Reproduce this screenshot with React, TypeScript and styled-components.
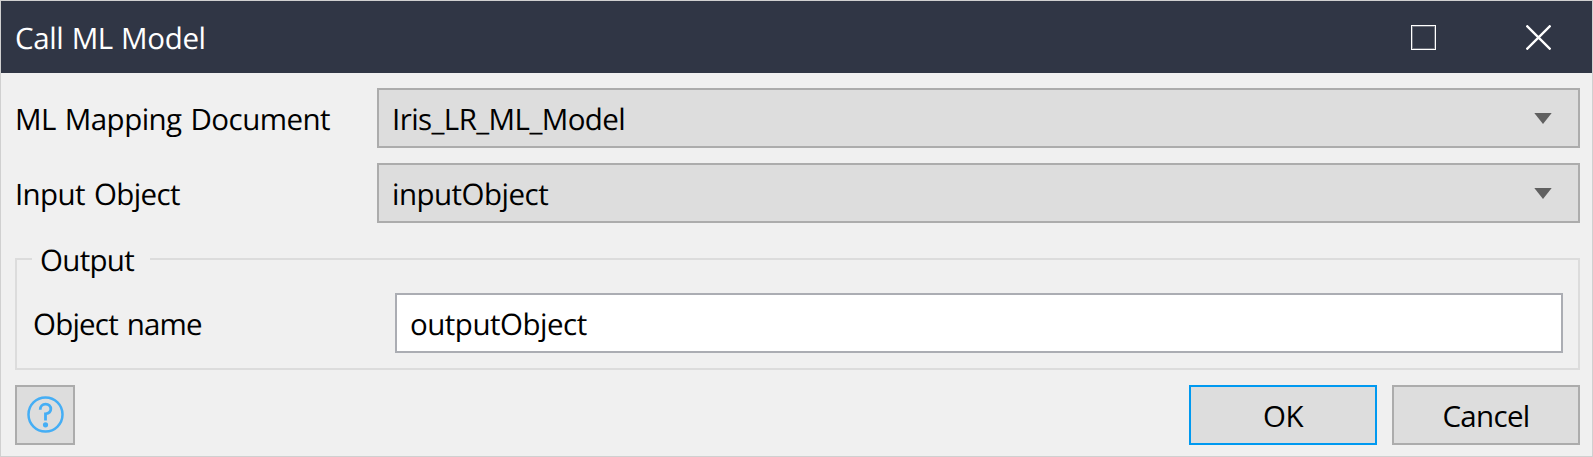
import React from "react";
import styled, { createGlobalStyle } from "styled-components";

const GlobalStyle = createGlobalStyle`
  * { box-sizing: border-box; }
  body { margin: 0; background: #f0f0f0; }
`;

const Dialog = styled.div`
  display: flex;
  flex-direction: column;
  width: 100%;
  height: 457px;
  border: 1px solid #d0d0d0;
  background: #f0f0f0;
  color: #000;
  font-family: "Open Sans", "Segoe UI", sans-serif;
  font-size: 29.5px;
  line-height: 40px;
  text-rendering: geometricPrecision;
`;

const TitleBar = styled.header`
  display: flex;
  align-items: center;
  justify-content: space-between;
  height: 72px;
  padding: 0 41px 0 14px;
  background: #303645;
  color: #fff;
`;

const WindowControls = styled.div`
  display: flex;
  align-items: center;
  gap: 90px;
  svg { display: block; }
`;

const Text = styled.span<{ $spacing?: number; $word?: number }>`
  padding-top: 2px;
  white-space: pre;
  letter-spacing: ${(p) => p.$spacing ?? 0}px;
  word-spacing: ${(p) => p.$word ?? 0}px;
`;

const Body = styled.main`
  display: flex;
  flex-direction: column;
  padding: 15px 12px 0 14px;
`;

const Row = styled.div`
  display: grid;
  grid-template-columns: 362px 1fr;
  align-items: center;
  height: 60px;
  & + & { margin-top: 15px; }
`;

const Select = styled.div`
  display: flex;
  align-items: center;
  justify-content: space-between;
  height: 60px;
  padding: 0 26px 0 13px;
  border: 2px solid #acacac;
  background: #dddddd;
  svg { display: block; }
`;

const Field = styled.div`
  display: flex;
  align-items: center;
  height: 60px;
  padding: 0 13px;
  border: 2px solid #abadb3;
  background: #fff;
`;

const Group = styled.fieldset`
  min-width: 0;
  margin: 16px 0 0;
  padding: 14px 15px 15px 16px;
  border: 2px solid #dcdcdc;
`;

const Legend = styled.legend`
  display: flex;
  width: 118px;
  height: 40px;
  margin-left: -1px;
  padding: 0 0 0 8px;
  line-height: 38px;
`;

const Footer = styled.footer`
  display: flex;
  gap: 15px;
  margin-top: 15px;
`;

const Button = styled.button<{ $primary?: boolean; $square?: boolean }>`
  display: flex;
  align-items: center;
  justify-content: center;
  width: ${(p) => (p.$square ? 60 : 188)}px;
  height: 60px;
  margin-right: ${(p) => (p.$square ? "auto" : "0")};
  padding: 0;
  border: 2px solid ${(p) => (p.$primary ? "#0099f0" : "#acacac")};
  background: #dddddd;
  color: #000;
  font: inherit;
`;

const Arrow = () => (
  <svg width="18" height="12" viewBox="0 0 18 12">
    <path d="M0.3 1H17.7L9 12Z" fill="#606060" />
  </svg>
);

export default function App() {
  return (
    <>
      <GlobalStyle />
      <Dialog>
        <TitleBar>
          <Text $spacing={-0.35} $word={0.9}>Call ML Model</Text>
          <WindowControls>
            <svg width="25" height="25" viewBox="0 0 25 25" fill="none">
              <rect x="1.5" y="1.5" width="22" height="22" stroke="#696d78" />
              <rect x="0.5" y="0.5" width="24" height="24" stroke="#fff" />
            </svg>
            <svg width="25" height="25" viewBox="0 0 25 25">
              <path d="M0.5 0.5L24.5 24.5M24.5 0.5L0.5 24.5" stroke="#fff" strokeWidth="2.3" />
            </svg>
          </WindowControls>
        </TitleBar>
        <Body>
          <Row>
            <Text $spacing={-0.54} $word={1.8}>ML Mapping Document</Text>
            <Select>
              <Text $spacing={-0.58}>Iris_LR_ML_Model</Text>
              <Arrow />
            </Select>
          </Row>
          <Row>
            <Text $spacing={-0.62} $word={2}>Input Object</Text>
            <Select>
              <Text $spacing={-0.52}>inputObject</Text>
              <Arrow />
            </Select>
          </Row>
          <Group>
            <Legend>
              <Text $spacing={-0.7}>Output</Text>
            </Legend>
            <Row>
              <Text $spacing={-0.8} $word={2}>Object name</Text>
              <Field>
                <Text $spacing={-0.5}>outputObject</Text>
              </Field>
            </Row>
          </Group>
          <Footer>
            <Button $square aria-label="Help">
              <svg width="38" height="38" viewBox="0 0 38 38" fill="none" stroke="#45aef5">
                <circle cx="19.5" cy="18.5" r="17" strokeWidth="2.5" />
                <path d="M14.2 13.8C14.2 10.4 16.4 8.2 19.6 8.2C22.8 8.2 24.8 10.3 24.8 13.1C24.8 16.4 22.4 17.6 19.5 17.8V24.6" strokeWidth="2.8" />
                <circle cx="19.5" cy="28.8" r="2.6" fill="#45aef5" stroke="none" />
              </svg>
            </Button>
            <Button $primary>
              <Text $spacing={-0.6}>OK</Text>
            </Button>
            <Button>
              <Text $spacing={-0.7}>Cancel</Text>
            </Button>
          </Footer>
        </Body>
      </Dialog>
    </>
  );
}
